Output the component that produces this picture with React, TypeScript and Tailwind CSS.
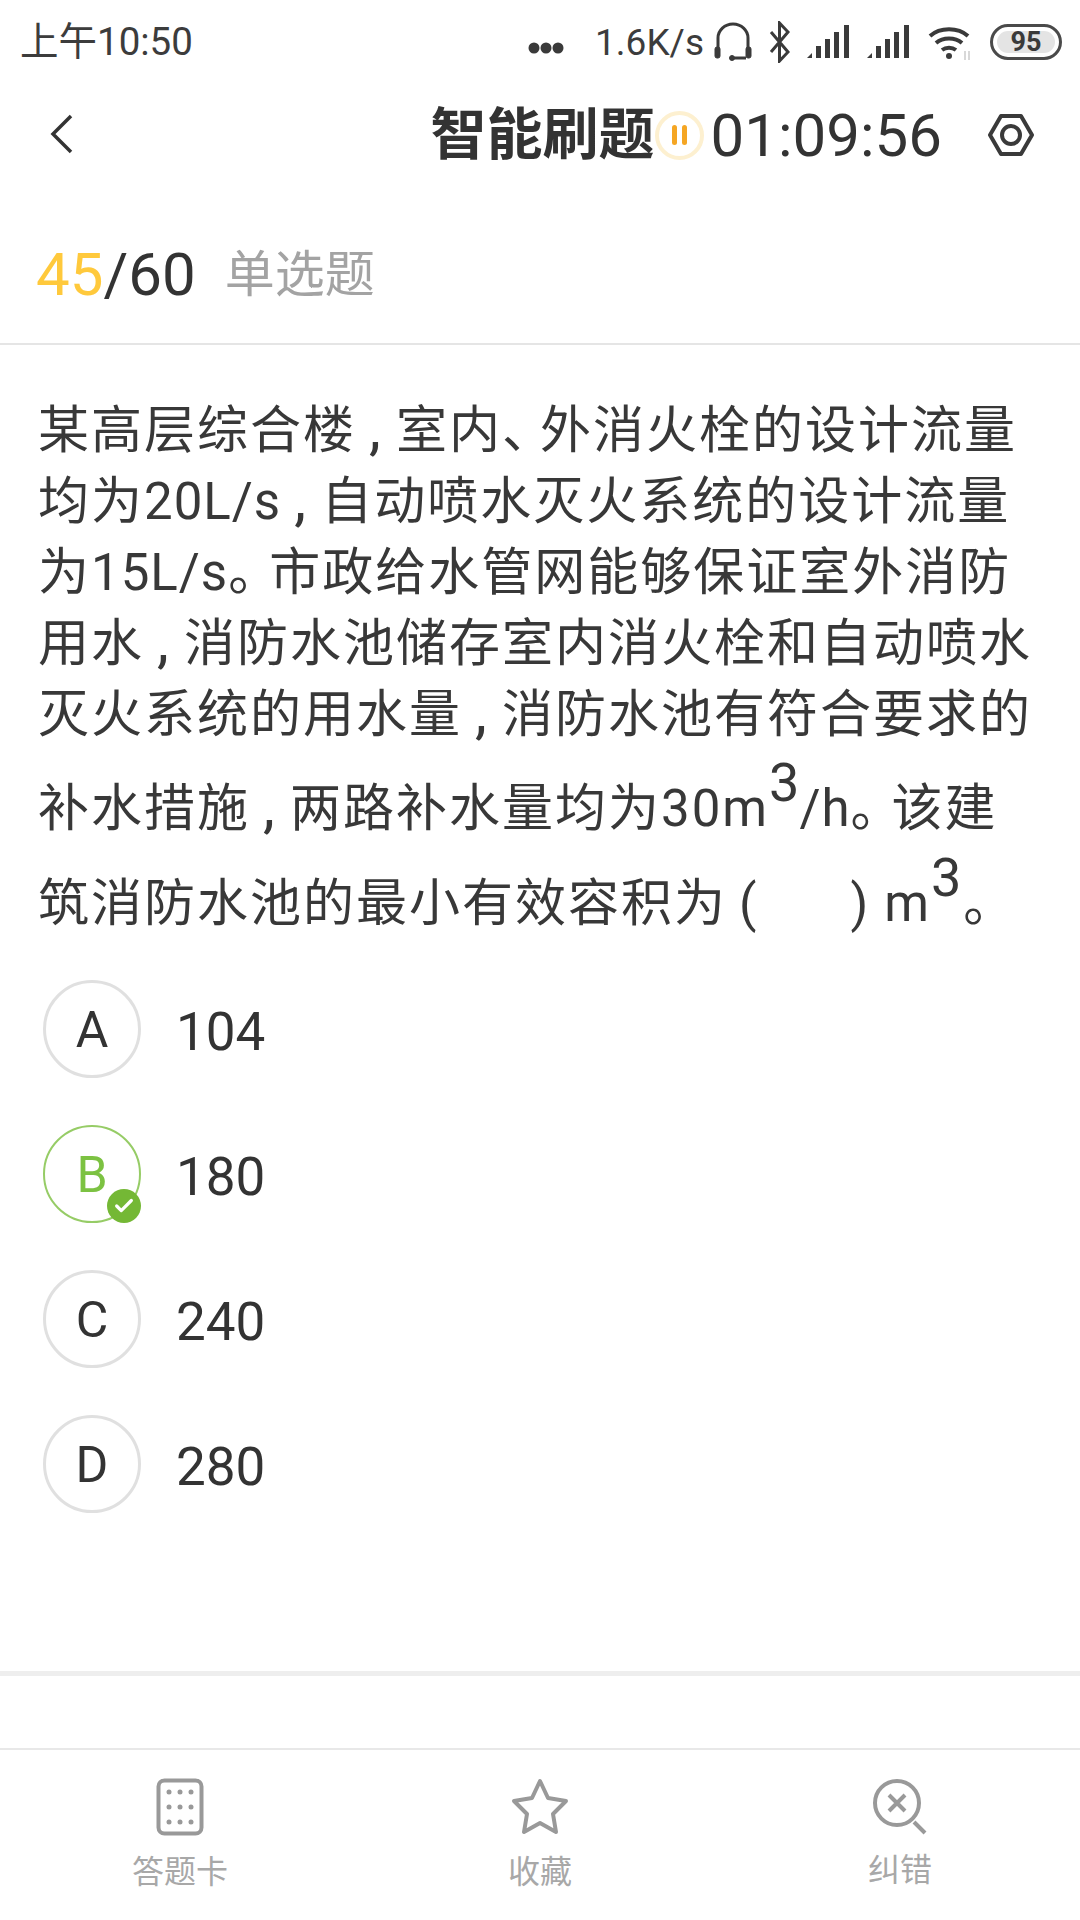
import { Check } from 'lucide-react'

const font = { fontFamily: 'Roboto, "Noto Sans CJK SC", sans-serif' }

const Signal = () => (
  <svg width="43" height="34" viewBox="0 0 43 34" className="ml-[17px]" fill="#3a3a3a">
    <path d="M0 33l5-5v5z" />
    <rect x="9" y="21" width="5" height="12" />
    <rect x="18" y="14" width="5" height="19" />
    <rect x="27" y="7" width="5" height="26" />
    <rect x="37" y="0" width="5" height="33" />
  </svg>
)

const StatusIcons = () => (
  <div className="flex items-center">
    <svg width="36" height="12" viewBox="0 0 36 12" className="mt-[12px]">
      <circle cx="6" cy="6" r="5.5" fill="#3a3a3a" />
      <circle cx="18" cy="6" r="5.5" fill="#3a3a3a" />
      <circle cx="30" cy="6" r="5.5" fill="#3a3a3a" />
    </svg>
    <span className="ml-[31px] text-[37px] leading-none text-[#3c3c3c]">1.6K/s</span>
    <svg width="38" height="40" viewBox="0 0 38 40" className="ml-[10px]" fill="none" stroke="#3a3a3a" strokeWidth="3">
      <path d="M4 30V16a15 14 0 0 1 30 0v14" />
      <path d="M32 36H17" />
      <rect x="1" y="25" width="5" height="11" rx="2" fill="#3a3a3a" strokeWidth="1" />
      <rect x="32" y="25" width="5" height="11" rx="2" fill="#3a3a3a" strokeWidth="1" />
      <circle cx="18" cy="36" r="2.5" fill="#3a3a3a" strokeWidth="1" />
    </svg>
    <svg width="21" height="42" viewBox="0 0 21 42" className="ml-[17px]" fill="none" stroke="#3a3a3a" strokeWidth="3">
      <path d="M2 11l17 20-8.500 9V2l8.500 9L2 31" />
    </svg>
    <Signal />
    <Signal />
    <svg width="44" height="37" viewBox="0 0 44 37" className="ml-[18px]" fill="none" stroke="#3a3a3a" strokeWidth="4">
      <path d="M2 12c10-9 28-9 38 0" />
      <path d="M8 19c7-6 19-6 26 0" />
      <path d="M14 26c4-3 10-3 14 0" />
      <circle cx="21" cy="32" r="3" fill="#3a3a3a" stroke="none" />
      <path d="M37 27v9M41 27v9" stroke="#cccccc" strokeWidth="1.500" />
    </svg>
    <div className="ml-[18px] flex h-[36px] w-[72px] items-center rounded-full border-[3px] border-[#4a4a4a] p-[4px]">
      <div className="flex h-full w-full items-center justify-center rounded-full bg-[#e4e4e4] text-[27px] font-bold leading-none text-[#3a3a3a]">
        95
      </div>
    </div>
  </div>
)

// punctuation in the question sits in narrower boxes than the CJK glyphs
const Comma = () => <span className="inline-block w-[40px] text-center text-[60px] leading-none">,</span>
const Dun = () => <span className="tracking-[-13px]">、</span>
const Stop = () => <span className="tracking-[-10px]">。</span>
const Latin = ({ children }: { children: string }) => <span className="tracking-[1px]">{children}</span>
const Sup = () => <span className="relative -top-[25px] text-[54px] leading-none tracking-normal">3</span>

const options = [
  { key: 'A', value: '104' },
  { key: 'B', value: '180', picked: true },
  { key: 'C', value: '240' },
  { key: 'D', value: '280' },
]

export default function App() {
  return (
    <div className="flex h-[1920px] w-[1080px] flex-col overflow-hidden bg-white text-[#333333]" style={font}>
      <div className="flex h-[84px] items-center justify-between pl-[20px] pr-[18px]">
        <span className="text-[38.5px] leading-none text-[#3c3c3c]">上午10:50</span>
        <StatusIcons />
      </div>

      <div className="relative flex h-[102px] items-center justify-end pr-[45px]">
        <svg width="24" height="40" viewBox="0 0 24 40" className="absolute left-[50px] top-[30px]" fill="none" stroke="#333333" strokeWidth="3.500">
          <path d="M21 2L3 20l18 18" />
        </svg>
        <span className="text-[56px] font-bold leading-none">智能刷题</span>
        <div className="flex h-[49px] w-[49px] items-center justify-center gap-[5px] rounded-full border-[4px] border-[#fdf0d0]">
          <div className="h-[20px] w-[5px] rounded-full bg-[#f5a623]" />
          <div className="h-[20px] w-[5px] rounded-full bg-[#f5a623]" />
        </div>
        <span className="ml-[7px] mt-[2px] text-[60px] leading-none">01:09:56</span>
        <svg width="48" height="48" viewBox="0 0 48 48" className="ml-[45px]" fill="none" stroke="#3a3a3a" strokeWidth="4">
          <path d="M14 5h20l11 19-11 19H14L3 24z" strokeLinejoin="round" />
          <circle cx="24" cy="24" r="9" />
        </svg>
      </div>

      <div className="flex h-[159px] items-center border-b-2 border-[#e5e5e5] pl-[36px] pt-[20px]">
        <span className="text-[60px] leading-none">
          <span className="text-[#ffc93c]">45</span>/60
        </span>
        <span className="ml-[29px] text-[50px] leading-none text-[#a3a3a3]">单选题</span>
      </div>

      <div className="mt-[50px] whitespace-nowrap pl-[38px] text-[51px] leading-[71px] tracking-[2px] text-[#383838]">
        <div className="h-[71px]">某高层综合楼<Comma />室内<Dun />外消火栓的设计流量</div>
        <div className="h-[71px]">均为<Latin>20L/s</Latin><Comma />自动喷水灭火系统的设计流量</div>
        <div className="h-[71px]">为<Latin>15L/s</Latin><Stop />市政给水管网能够保证室外消防</div>
        <div className="h-[71px]">用水<Comma />消防水池储存室内消火栓和自动喷水</div>
        <div className="h-[71px]">灭火系统的用水量<Comma />消防水池有符合要求的</div>
        <div className="mt-[23px]">
          补水措施<Comma />两路补水量均为30m<Sup /><Latin>/h</Latin><Stop />该建
        </div>
        <div className="mt-[24px]">
          筑消防水池的最小有效容积为
          <span className="ml-[12px]">(</span>
          <span className="ml-[92px]">)</span>
          <span className="ml-[14px]">m</span>
          <Sup />
          <span className="ml-[2px]"><Stop /></span>
        </div>
      </div>

      <div className="mt-[41px] flex flex-col gap-[47px] pl-[43px]">
        {options.map((o) => (
          <div key={o.key} className="flex items-center">
            <div
              className={
                o.picked
                  ? 'relative flex h-[98px] w-[98px] items-center justify-center rounded-full border-2 border-[#96cc66] pt-[2px] text-[50px] text-[#7cc242]'
                  : 'relative flex h-[98px] w-[98px] items-center justify-center rounded-full border-[3px] border-[#e0e0e0] pt-[2px] text-[50px] text-[#333333]'
              }
            >
              {o.key}
              {o.picked && (
                <div className="absolute -bottom-[2px] -right-[2px] flex h-[34px] w-[34px] items-center justify-center rounded-full bg-[#74b835]">
                  <Check size={22} color="#ffffff" strokeWidth={3.500} />
                </div>
              )}
            </div>
            <span className="ml-[35px] mt-[6px] text-[53px] leading-none">{o.value}</span>
          </div>
        ))}
      </div>

      <div className="mt-[158px] h-[5px] bg-[#eeeeee]" />
      <div className="mt-[72px] flex flex-1 items-start border-t-2 border-[#e8e8e8] text-[32px] text-[#a8a8a8]">
        <div className="ml-[130px] flex w-[100px] flex-col items-center pt-[28px]">
          <svg width="48" height="58" viewBox="0 0 48 58" fill="#999999">
            <rect x="2.500" y="2.500" width="43" height="53" rx="6" fill="none" stroke="#999999" strokeWidth="4" />
            {[14, 29, 44].map((y) =>
              [13, 24, 35].map((x) => <circle key={`${x}-${y}`} cx={x} cy={y} r="2.500" />),
            )}
          </svg>
          <span className="mt-[20px] whitespace-nowrap leading-none">答题卡</span>
        </div>
        <div className="ml-[260px] flex w-[100px] flex-col items-center pt-[28px]">
          <svg width="58" height="58" viewBox="0 0 58 58" fill="none" stroke="#999999" strokeWidth="4" strokeLinejoin="round">
            <path d="M29 3l8 17 18 3-13 13 3 18-16-9-16 9 3-18L3 23l18-3z" />
          </svg>
          <span className="mt-[20px] whitespace-nowrap leading-none">收藏</span>
        </div>
        <div className="ml-[260px] flex w-[100px] flex-col items-center pt-[28px]">
          <svg width="56" height="58" viewBox="0 0 56 58" fill="none" stroke="#999999" strokeWidth="4">
            <circle cx="25" cy="25" r="22" />
            <path d="M17 17l16 16M33 17L17 33" />
            <path d="M42 44l11 11" />
          </svg>
          <span className="mt-[18px] whitespace-nowrap leading-none">纠错</span>
        </div>
      </div>
    </div>
  )
}
